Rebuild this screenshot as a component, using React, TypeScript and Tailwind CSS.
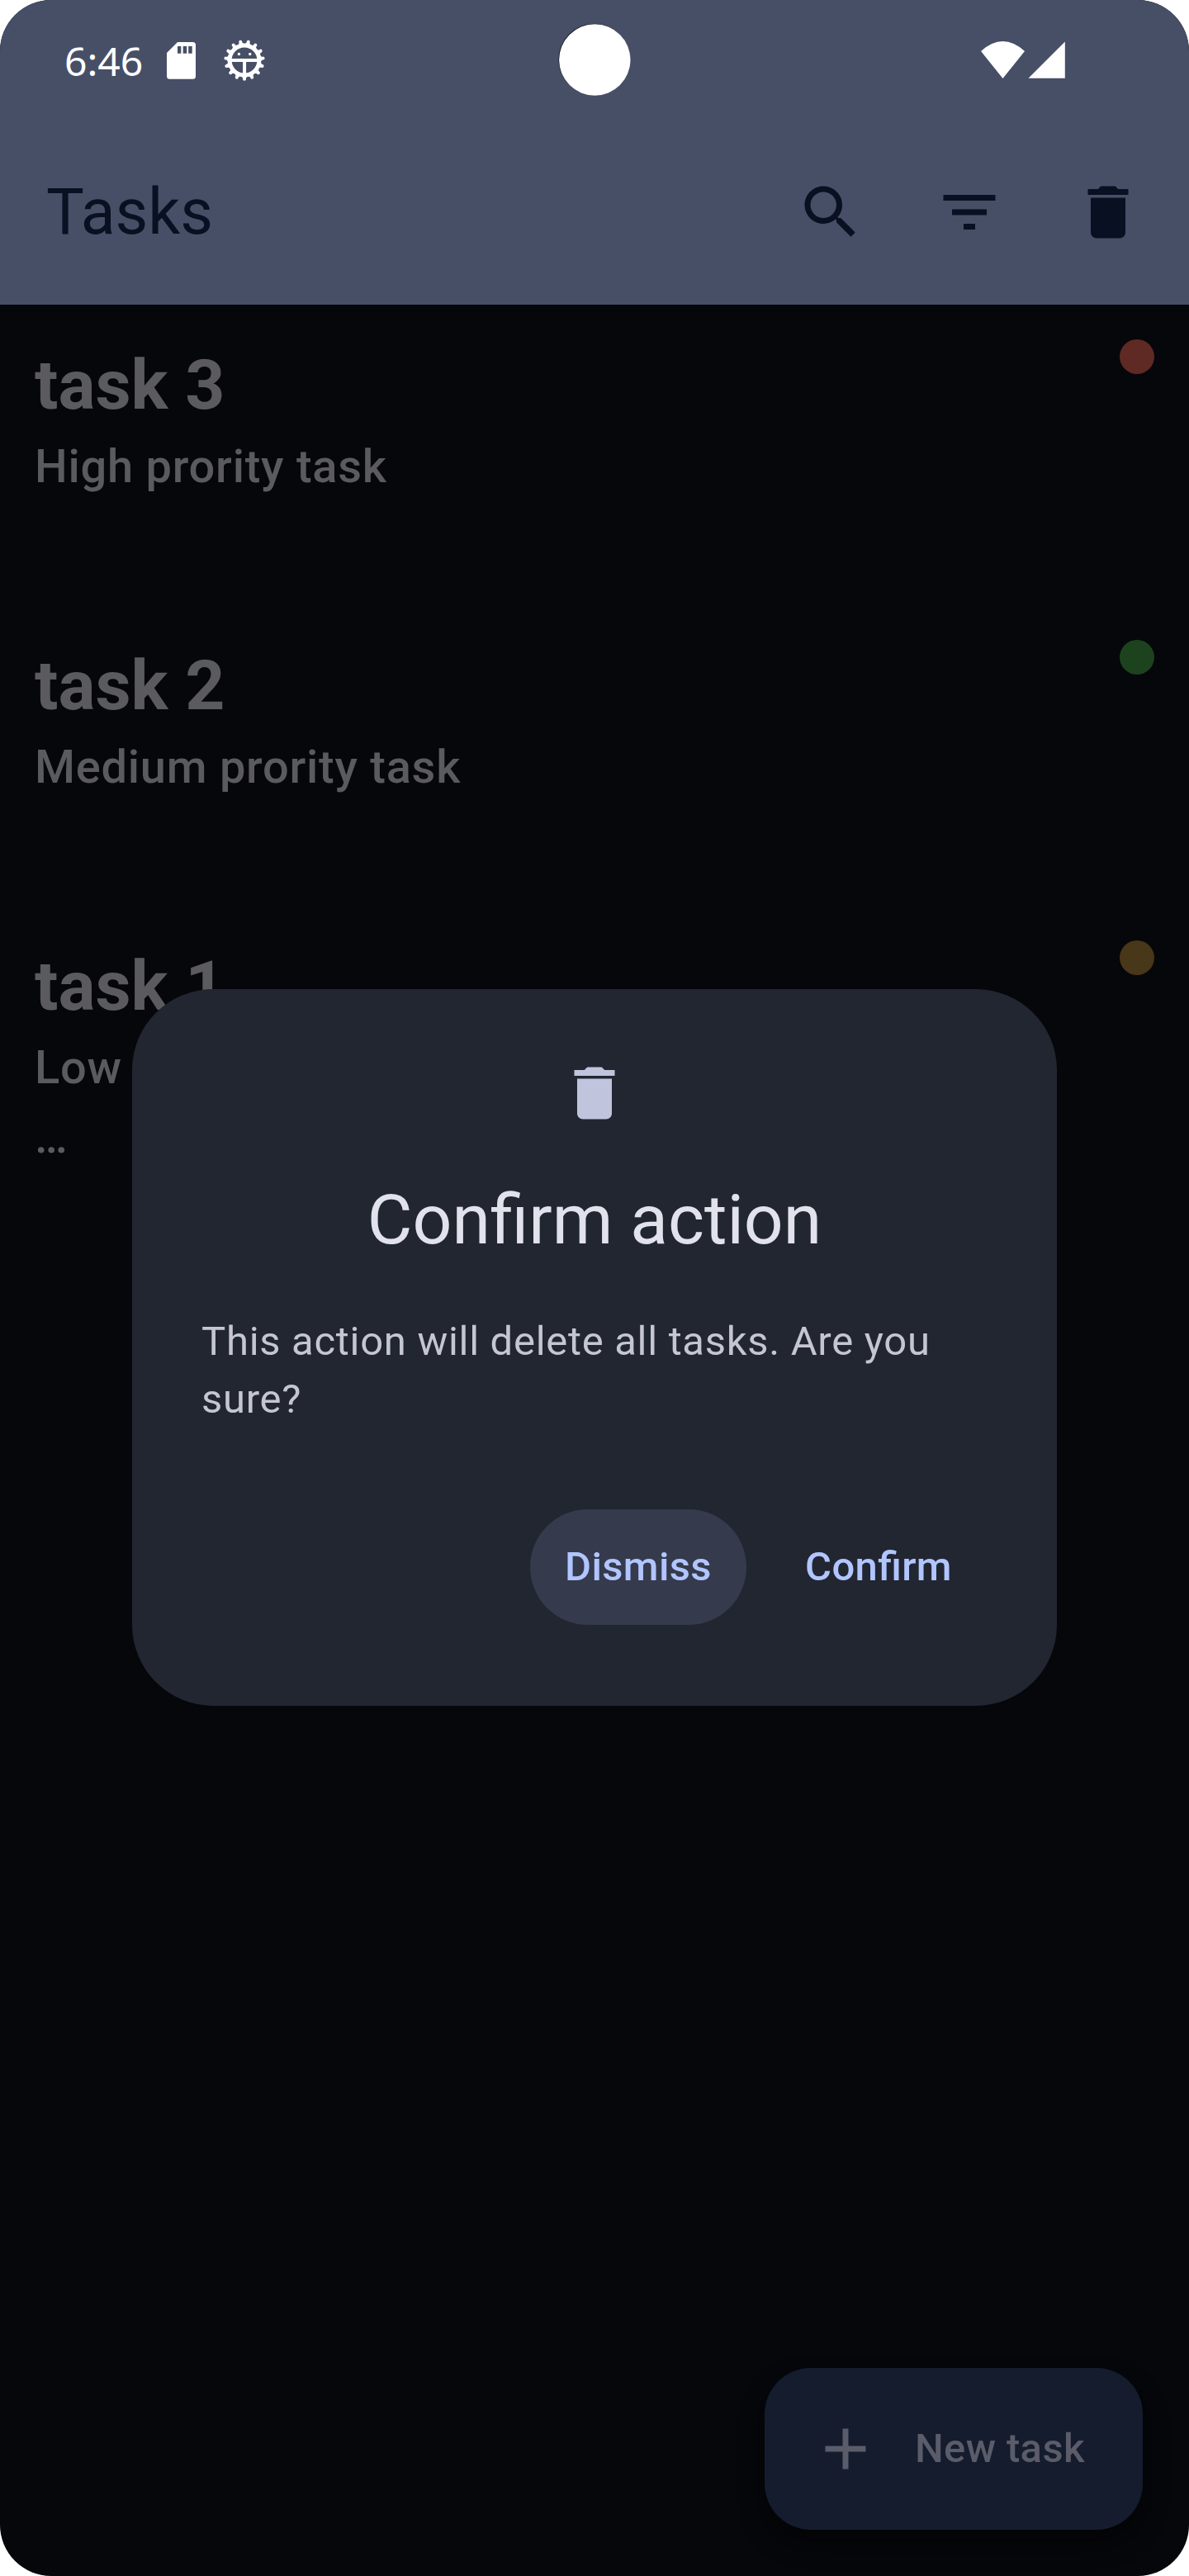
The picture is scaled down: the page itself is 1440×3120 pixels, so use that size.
import React from "react";

const DELETE_PATH = "M6 19c0 1.1.9 2 2 2h8c1.1 0 2-.9 2-2V7H6v12zM19 4h-3.5l-1-1h-5l-1 1H5v2h14V4z";
const SEARCH_PATH =
  "M15.5 14h-.79l-.28-.27C15.41 12.59 16 11.11 16 9.5 16 5.91 13.09 3 9.5 3S3 5.91 3 9.5 5.91 16 9.5 16c1.61 0 3.09-.59 4.23-1.57l.27.28v.79l5 4.99L20.49 19l-4.99-5zm-6 0C7.01 14 5 11.99 5 9.5S7.01 5 9.5 5 14 7.01 14 9.5 11.99 14 9.5 14z";
const FILTER_PATH = "M10 18h4v-2h-4v2zM3 6v2h18V6H3zm3 7h12v-2H6v2z";
const ADD_PATH = "M19 13h-6v6h-2v-6H5v-2h6V5h2v6h6v2z";

function Icon({ d, className = "" }: { d: string; className?: string }) {
  return (
    <svg viewBox="0 0 24 24" className={`size-[84px] shrink-0 fill-current ${className}`}>
      <path d={d} />
    </svg>
  );
}

function SdCardIcon() {
  return (
    <svg viewBox="0 0 35 45" className="h-[45px] w-[35px] fill-white">
      <path
        fillRule="evenodd"
        d="M13 0H31.500Q35 0 35 3.500V41.200Q35 44.700 31.500 44.700H3.500Q0 44.700 0 41.200V13ZM13 5V13.700H17.300V5ZM19.700 5V13.700H24.200V5ZM26.200 5V13.700H30.700V5Z"
      />
    </svg>
  );
}

const TEETH = Array.from({ length: 15 }, (_, i) => i * 24);

function BugIcon() {
  return (
    <svg viewBox="-25 -25 50 50" className="size-[50px]">
      <g stroke="white" fill="none">
        <circle r="17.900" strokeWidth="5" />
        {TEETH.map((a) => (
          <g key={a} transform={`rotate(${a})`}>
            <path d="M0 18V22.700" strokeWidth="4" strokeLinecap="round" />
            <path d="M-3.900 19.400L0 23L3.900 19.400Z" fill="white" stroke="none" />
          </g>
        ))}
        <path d="M-16 .1H16M.1 .1V17" strokeWidth="4" />
      </g>
      <circle cx="-6.600" cy="-7.500" r="1.700" fill="white" />
      <circle cx="6.700" cy="-7.500" r="1.700" fill="white" />
    </svg>
  );
}

function StatusBar() {
  return (
    <div className="relative flex h-[145px] items-start justify-between text-white">
      <div className="flex h-[146px] items-center pl-[78px]">
        <span className="w-[124px] pt-0.5 text-[48px] leading-[70px] [font-family:'Noto_Sans',sans-serif]">6:46</span>
        <SdCardIcon />
        <div className="ml-[34px]">
          <BugIcon />
        </div>
      </div>
      <svg viewBox="0 0 102 45" className="mt-[50px] mr-[150px] h-[45px] w-[102px] fill-white">
        <path d="M0 12Q26.500 -12 53 12L26.500 45Z" />
        <path d="M101.800 .5V44.700H57.500Z" />
      </svg>
      <svg viewBox="0 0 90 90" className="absolute top-[27px] left-[675px] size-[90px]">
        <circle cx="44.600" cy="45" r="43.200" fill="#11131b" />
        <circle cx="45.300" cy="45.500" r="43.200" fill="white" />
      </svg>
    </div>
  );
}

function TopAppBar() {
  return (
    <div className="flex h-[224px] items-center pr-[14px] pl-14 text-[#081022]">
      <h1 className="flex-1 text-[77px] leading-[98px]">Tasks</h1>
      {[SEARCH_PATH, FILTER_PATH, DELETE_PATH].map((d) => (
        <button key={d} className="flex size-[168px] items-center justify-center">
          <Icon d={d} />
        </button>
      ))}
    </div>
  );
}

const TASKS = [
  { title: "task 3", lines: ["High prority task"], dot: "bg-[#5f2a24]" },
  { title: "task 2", lines: ["Medium prority task"], dot: "bg-[#1d431e]" },
  { title: "task 1", lines: ["Low prority task", "…"], dot: "bg-[#483718]" },
];

function TaskList() {
  return (
    <ul>
      {TASKS.map((t) => (
        <li key={t.title} className="flex h-[364px] justify-between p-[42px] text-[#5b5a5f]">
          <div>
            <h2 className="text-[84px] leading-[112px] font-bold">{t.title}</h2>
            {t.lines.map((l) => (
              <p key={l} className="text-[56px] leading-[84px] font-medium tracking-[0.75px]">
                {l}
              </p>
            ))}
          </div>
          <span className={`size-[42px] rounded-full ${t.dot}`} />
        </li>
      ))}
    </ul>
  );
}

function ConfirmDialog() {
  return (
    <div className="absolute top-[1198px] left-[160px] flex w-[1120px] flex-col items-center rounded-[98px] bg-[#222631] p-[84px]">
      <Icon d={DELETE_PATH} className="text-[#c0c5dd]" />
      <h2 className="mt-14 text-[84px] leading-[112px] text-[#e2e2ec]">Confirm action</h2>
      <p className="mt-14 w-full text-[49px] leading-[70px] tracking-[0.7px] text-[#c5c6d0]">
        This action will delete all tasks. Are you sure?
      </p>
      <div className="mt-[98px] mb-[14px] flex gap-7 self-end text-[49px] leading-[70px] font-medium tracking-[0.35px] text-[#b1c5ff] [font-feature-settings:'liga'_1]">
        <button className="h-[140px] w-[262px] rounded-full bg-[#353a4c]">Dismiss</button>
        <button className="h-[140px] w-[264px] rounded-full">Confirm</button>
      </div>
    </div>
  );
}

function NewTaskButton() {
  return (
    <button className="absolute right-14 bottom-14 flex h-[196px] w-[458px] items-center gap-[42px] rounded-[56px] bg-[#141c2e] pl-14 text-[49px] leading-[70px] font-medium tracking-[0.35px] text-[#5b5c69] shadow-[0_16px_28px_0_rgba(4,4,4,0.8)]">
      <Icon d={ADD_PATH} />
      New task
    </button>
  );
}

export default function App() {
  return (
    <div className="h-[3120px] w-[1440px] bg-white [font-family:Roboto,sans-serif]">
      <div className="relative h-[3120px] overflow-hidden rounded-[62px] bg-[#06070b]">
        <header className="bg-[#474f67]">
          <StatusBar />
          <TopAppBar />
        </header>
        <TaskList />
        <NewTaskButton />
        <ConfirmDialog />
      </div>
    </div>
  );
}
